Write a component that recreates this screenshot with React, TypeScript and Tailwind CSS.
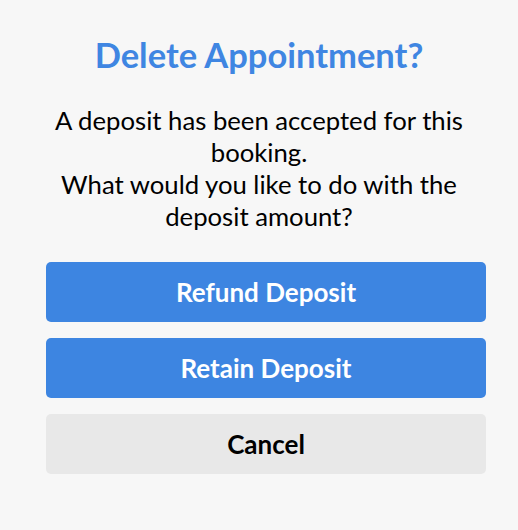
import React from "react";

export default function App() {
  return (
    <div className="w-[518px] h-[530px] bg-[#f7f7f7] flex flex-col" style={{ fontFamily: "Lato, sans-serif" }}>
      <h1 className="mt-[35px] text-center text-[34.5px] font-bold leading-[40px] text-[#3f86e2]">Delete Appointment?</h1>
      <p className="mt-[29px] mx-auto w-[440px] text-center text-[25.7px] leading-[32px] text-black">
        A deposit has been accepted for this booking.
        <br />
        What would you like to do with the deposit amount?
      </p>
      <div className="mt-[30px] ml-[46px] w-[440px] flex flex-col gap-4">
        <button className="h-[60px] rounded-[5px] bg-[#3d85e1] text-white text-[26px] font-bold">Refund Deposit</button>
        <button className="h-[60px] rounded-[5px] bg-[#3d85e1] text-white text-[26px] font-bold">Retain Deposit</button>
        <button className="h-[60px] rounded-[5px] bg-[#e8e8e8] text-black text-[26px] font-bold">Cancel</button>
      </div>
    </div>
  );
}
